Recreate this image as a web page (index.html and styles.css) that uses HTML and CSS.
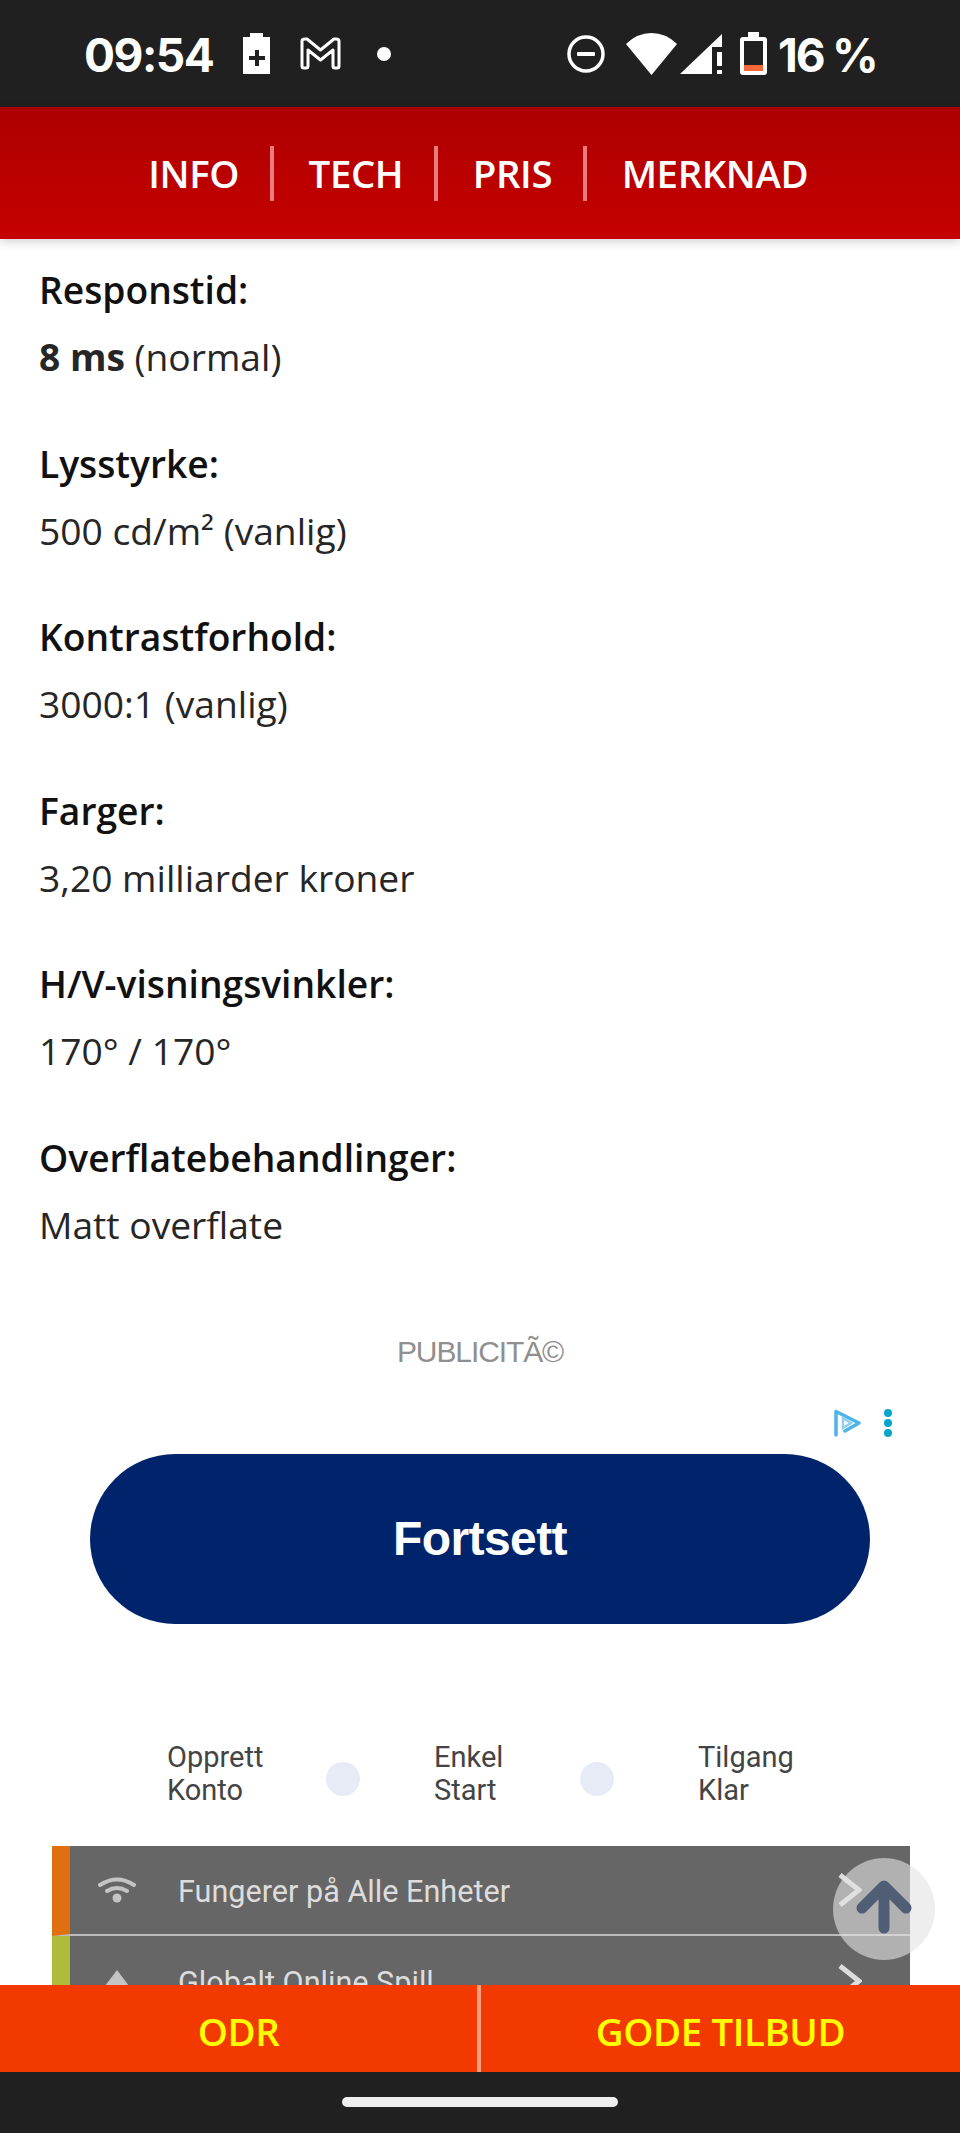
FILE: index.html
```html
<!DOCTYPE html>
<html lang="no">
<head>
<meta charset="utf-8">
<title>Spesifikasjoner</title>
<link rel="stylesheet" href="styles.css">
</head>
<body>
<div class="phone">
  <header class="status">
    <span class="clock">09:54</span>
    <svg class="ic-charge" viewBox="0 0 27 41"><path fill="#fff" fill-rule="evenodd" d="M7 0h13v4h7v37H0V4h7zM12 17v6H6v4h6v6h4v-6h6v-4h-6v-6z" transform="translate(0 0)"/></svg>
    <svg class="ic-gmail" viewBox="0 0 41 33"><path fill="none" stroke="#fff" stroke-width="3" stroke-linejoin="round" d="M2 4q0-2 3-2h2l13.500 11L34 2h2q3 0 3 2v25q0 2-2 2h-2q-2 0-2-2V13L20.500 23 8 13v16q0 2-2 2H4q-2 0-2-2z"/></svg>
    <span class="dot"></span>
    <span class="spacer"></span>
    <svg class="ic-dnd" viewBox="0 0 38 38"><circle cx="19" cy="19" r="17" fill="none" stroke="#fff" stroke-width="3.500"/><rect x="10" y="17" width="18" height="4" rx="1" fill="#fff"/></svg>
    <svg class="ic-wifi" viewBox="0 0 51 42"><path fill="#fff" d="M25.500 42 0 11Q11 0 25.500 0T51 11z"/></svg>
    <svg class="ic-signal" viewBox="0 0 42 40"><path fill="#fff" d="M0 40 32 9.500V40zM32 9.500 42 0v13H32zM37 18h5v14h-5zM37 36h5v4h-5z"/></svg>
    <svg class="ic-batt" viewBox="0 0 27 43"><path fill="#fff" fill-rule="evenodd" d="M8 0h11v5h5q3 0 3 3v32q0 3-3 3H3q-3 0-3-3V8q0-3 3-3h5zM4 9v30h19V9z"/><rect x="4" y="33" width="19" height="6" fill="#f4683a"/></svg>
    <span class="level">16 %</span>
  </header>

  <nav class="tabs">
    <a class="tab">INFO</a>
    <a class="tab">TECH</a>
    <a class="tab">PRIS</a>
    <a class="tab">MERKNAD</a>
  </nav>

  <main class="content">
    <dl class="specs">
      <div class="spec"><dt>Responstid:</dt><dd><b>8 ms</b> (normal)</dd></div>
      <div class="spec"><dt>Lysstyrke:</dt><dd>500 cd/m² (vanlig)</dd></div>
      <div class="spec"><dt>Kontrastforhold:</dt><dd>3000:1 (vanlig)</dd></div>
      <div class="spec"><dt>Farger:</dt><dd>3,20 milliarder kroner</dd></div>
      <div class="spec"><dt>H/V-visningsvinkler:</dt><dd>170° / 170°</dd></div>
      <div class="spec"><dt>Overflatebehandlinger:</dt><dd>Matt overflate</dd></div>
    </dl>

    <p class="ad-label">PUBLICITÃ©</p>

    <section class="ad">
      <div class="ad-tools">
        <svg class="ic-adplay" viewBox="0 0 28 28"><path fill="none" stroke="#4fb3e8" stroke-width="3.500" stroke-linecap="round" stroke-linejoin="round" d="M3 26V2.500L26 14 12 22"/><path fill="none" stroke="#8fd0f0" stroke-width="2.500" d="M10 9l8 5-8 5z"/></svg>
        <svg class="ic-adinfo" viewBox="0 0 8 28"><circle cx="4" cy="4" r="4" fill="#04a6c9"/><circle cx="4" cy="14" r="4" fill="#04a6c9"/><circle cx="4" cy="24" r="4" fill="#04a6c9"/></svg>
      </div>
      <div class="cta">Fortsett</div>
      <div class="steps">
        <span class="step step-a">Opprett<br>Konto</span>
        <span class="step-dot"></span>
        <span class="step step-b">Enkel<br>Start</span>
        <span class="step-dot"></span>
        <span class="step step-c">Tilgang<br>Klar</span>
      </div>
      <ul class="panel">
        <li class="row row-orange">
          <svg class="row-ic" viewBox="0 0 38 26"><path fill="none" stroke="#c4c4c4" stroke-width="4" stroke-linecap="round" d="M2 8q17-11 34 0M9 14q10-6 20 0"/><circle cx="19" cy="21" r="4.500" fill="#c4c4c4"/></svg>
          <span class="row-text">Fungerer på Alle Enheter</span>
          <svg class="chev" viewBox="0 0 24 34"><path fill="none" stroke="#ddd" stroke-width="5" d="M2 2l19 15L2 32"/></svg>
        </li>
        <li class="row row-green">
          <svg class="row-ic" viewBox="0 0 38 26"><path fill="#c4c4c4" d="M19 2l12 16H7z"/></svg>
          <span class="row-text">Globalt Online Spill</span>
          <svg class="chev" viewBox="0 0 24 34"><path fill="none" stroke="#ddd" stroke-width="5" d="M2 2l19 15L2 32"/></svg>
        </li>
      </ul>
    </section>
  </main>

  <div class="actions">
    <a class="action action-left">ODR</a>
    <a class="action action-right">GODE TILBUD</a>
  </div>

  <footer class="gesture"><span class="pill"></span></footer>

  <button class="totop" aria-label="Til toppen">
    <svg viewBox="0 0 56 54"><path fill="none" stroke="#4f5d75" stroke-width="11" stroke-linecap="round" stroke-linejoin="round" d="M28 48V8M6 28L28 6l22 22"/></svg>
  </button>
</div>
</body>
</html>
```

FILE: styles.css
```css
* { box-sizing: border-box; }
html, body { margin: 0; padding: 0; }
body { background: #fff; }

.phone {
  position: relative;
  width: 960px;
  height: 2133px;
  display: flex;
  flex-direction: column;
  overflow: hidden;
  font-family: "Open Sans", sans-serif;
}

/* status bar */
.status {
  flex: 0 0 107px;
  background: #202020;
  display: flex;
  align-items: center;
  padding: 0 85px;
  color: #fff;
  font-family: Inter, Roboto, sans-serif;
  font-weight: 700;
}
.clock { font-size: 46px; letter-spacing: -1.500px; line-height: 1; width: 158px; margin-left: -1px; margin-right: 1px; margin-top: 2px; }
.ic-charge { width: 27px; height: 41px; }
.ic-gmail { width: 41px; height: 33px; margin-left: 30px; }
.dot { width: 14px; height: 14px; border-radius: 50%; background: #fff; margin-left: 36px; }
.spacer { flex: 1; }
.ic-dnd { width: 38px; height: 38px; }
.ic-wifi { width: 51px; height: 42px; margin-left: 21px; }
.ic-signal { width: 42px; height: 40px; margin-left: 3px; }
.ic-batt { width: 27px; height: 43px; margin-left: 18px; }
.level { font-size: 46px; line-height: 1; margin-left: 11px; width: 97px; white-space: nowrap; letter-spacing: -2.200px; margin-top: 2px; }

/* tab nav */
.tabs {
  flex: 0 0 132px;
  position: relative;
  z-index: 2;
  background: linear-gradient(#ad0000, #c60000);
  box-shadow: 0 3px 10px rgba(0, 0, 0, .18);
  display: flex;
  justify-content: center;
  align-items: center;
  padding-right: 7px;
}
.tab {
  color: #fff;
  font-size: 38.400px;
  font-weight: 600;
  line-height: 55px;
  padding: 0 31px 0 34.500px;
  letter-spacing: -.4px;
  border-left: 4px solid #e97c7c;
}
.tab:first-child { border-left: 0; }

/* content */
.content { flex: 1; min-height: 0; overflow: hidden; }
.specs { margin: 0; padding: 17px 39px 0; color: #262626; font-size: 37.200px; }
.spec { margin: 0 0 39.500px; }
.spec dt { font-weight: 600; color: #111; line-height: 67px; }
.spec dd { margin: 0; line-height: 67px; }
.spec b { font-weight: 700; }

.ad-label {
  margin: 76.500px 0 0;
  text-align: center;
  font-family: "Liberation Sans", sans-serif;
  font-size: 30px;
  letter-spacing: -1.100px;
  line-height: 36px;
  color: #8f8f8f;
}

.ad { margin: 0; padding: 0; }
.ad-tools { display: flex; justify-content: flex-end; align-items: center; gap: 23px; height: 28px; margin-top: 38.500px; padding-right: 68px; }
.ic-adplay { width: 28px; height: 28px; }
.ic-adinfo { width: 8px; height: 28px; }
.cta {
  margin: 17px 90px 0;
  height: 170px;
  border-radius: 85px;
  background: #00246b;
  color: #fff;
  font-family: "Liberation Sans", sans-serif;
  font-weight: 700;
  font-size: 48px;
  letter-spacing: -.6px;
  line-height: 170px;
  text-align: center;
}
.steps { display: flex; align-items: center; height: 66px; margin-top: 117px; padding-left: 167px; color: #444; font-family: Roboto, sans-serif; font-size: 29px; line-height: 33px; }
.step { display: block; }
.step-a { width: 159px; }
.step-b { width: 146px; }
.step-c { margin-left: 84px; }
.step-dot { width: 34px; height: 34px; border-radius: 50%; background: #e6ebf5; flex: none; margin-top: 10px; }
.step-a + .step-dot { margin-right: 74px; }
.step-b + .step-dot { margin-right: 0; }

.panel { list-style: none; margin: 39px 50px 0 52px; padding: 0; background: #666; }
.row { display: flex; align-items: center; height: 90px; border-left: 18px solid; border-bottom: 2px solid #bbb; color: #ddd; font-family: Roboto, sans-serif; font-size: 30.600px; position: relative; }
.row-orange { border-left-color: #e0700f; }
.row-green { border-left-color: #afbc3a; border-bottom: 0; }
.row-ic { width: 38px; height: 26px; margin-left: 28px; flex: none; }
.row-text { margin-left: 42px; padding-top: 3px; flex: 1; }
.chev { width: 24px; height: 34px; margin-right: 48px; flex: none; }

/* bottom */
.actions { flex: 0 0 87px; position: relative; z-index: 2; background: #f23a00; display: flex; }
.action { display: flex; align-items: center; justify-content: center; color: #ff0; font-size: 38.400px; font-weight: 600; letter-spacing: -.4px; padding-top: 4px; }
.action-left { flex: 0 0 477px; }
.action-right { flex: 1; border-left: 4px solid #f9a07f; }
.gesture { flex: 0 0 61px; background: #202020; display: flex; justify-content: center; padding-top: 25px; position: relative; z-index: 2; }
.pill { width: 276px; height: 10px; border-radius: 5px; background: #eee; }

.totop {
  position: absolute;
  z-index: 3;
  left: 833px;
  top: 1858px;
  width: 102px;
  height: 102px;
  border: 0;
  border-radius: 50%;
  padding: 18px 23px 23px;
  background: rgba(227, 227, 227, .6);
}
.totop svg { display: block; width: 56px; height: 54px; }
```
